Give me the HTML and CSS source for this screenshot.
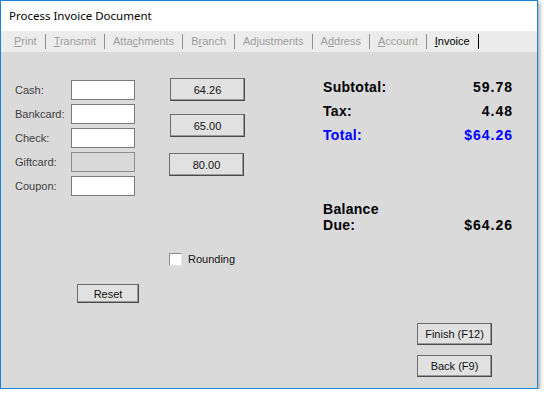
FILE: index.html
```html
<!doctype html>
<html>
    <head>
        <meta charset="UTF-8">
        <title>Process Invoice Document</title>
        <link rel="stylesheet" href="styles.css">
    </head>
    <body>
        <div class="window">
            <div class="titlebar">Process Invoice Document</div>
            <div class="tabs">
                <span class="tab"><u>P</u>rint</span>
                <span class="tab"><u>T</u>ransmit</span>
                <span class="tab">Atta<u>c</u>hments</span>
                <span class="tab">B<u>r</u>anch</span>
                <span class="tab">Ad<u>j</u>ustments</span>
                <span class="tab">A<u>d</u>dress</span>
                <span class="tab"><u>A</u>ccount</span>
                <span class="tab active"><u>I</u>nvoice</span>
            </div>
            <div class="main">
                <div class="col-left">
                    <div class="payments">
                        <label>Cash:</label><input type="text" class="field">
                        <label>Bankcard:</label><input type="text" class="field">
                        <label>Check:</label><input type="text" class="field">
                        <label>Giftcard:</label><input type="text" class="field" disabled>
                        <label>Coupon:</label><input type="text" class="field">
                    </div>
                    <button class="btn reset">Reset</button>
                </div>
                <div class="col-mid">
                    <button class="btn amount">64.26</button>
                    <button class="btn amount second">65.00</button>
                    <button class="btn amount third">80.00</button>
                    <label class="check"><span class="box"></span>Rounding</label>
                </div>
                <div class="col-right">
                    <div class="summary">
                        <div class="row"><span>Subtotal:</span><span class="val">59.78</span></div>
                        <div class="row"><span>Tax:</span><span class="val">4.48</span></div>
                        <div class="row total"><span>Total:</span><span class="val">$64.26</span></div>
                        <div class="row balance"><span>Balance<br>Due:</span><span class="val">$64.26</span></div>
                    </div>
                    <div class="actions">
                        <button class="btn action">Finish (F12)</button>
                        <button class="btn action back">Back (F9)</button>
                    </div>
                </div>
            </div>
        </div>
    </body>
</html>
```

FILE: styles.css
```css
*{
    margin: 0;
    padding: 0;
    box-sizing: border-box;
}
body{
    background: #ffffff;
    font-family: "Liberation Sans", Arial, sans-serif;
    font-size: 11px;
}
.window{
    width: 538px;
    height: 389px;
    border: 1px solid #1883d7;
    background: #dadada;
    box-shadow: 2px 2px 4px rgba(0,0,0,0.35);     /*窗口阴影*/
}
.titlebar{
    height: 30px;
    padding-left: 8px;
    background: #ffffff;
    font-family: "Noto Sans", "Open Sans", sans-serif;
    font-size: 11.5px;
    line-height: 30px;
    color: #000000;
}
.tabs{
    display: flex;
    align-items: center;
    height: 21px;
    padding-left: 5px;
    background: #ececec;
}
.tab{
    height: 15px;
    padding: 0 8px;
    line-height: 15px;
    color: #9d9d9d;
    border-right: 1px solid #8f8f8f;
}
.tab.active{
    color: #000000;
    border-right-color: #000000;
}
.main{
    display: flex;
    align-items: flex-start;
    padding: 26px 0 0 14px;
}
.col-left{
    display: flex;
    flex-direction: column;
    width: 155px;
}
.payments{
    display: grid;
    grid-template-columns: 56px 64px;
    grid-auto-rows: 20px;
    row-gap: 4px;
    margin-top: 2px;
}
.payments label{
    line-height: 20px;
    color: #3e3e3e;
}
.field{
    width: 64px;
    height: 20px;
    border: 1px solid #7a7a7a;
    background: #ffffff;
    outline: none;
}
.field:disabled{
    background: #dadada;
    border-color: #8c8c8c;
}
.btn{
    height: 23px;
    border: 1px solid #6c6c6c;
    border-right-color: #4a4a4a;
    border-bottom-color: #4a4a4a;
    background: #e1e1e1;
    box-shadow: inset -1px -1px 0 #9a9a9a;       /*按钮立体效果*/
    font-family: "Liberation Sans", Arial, sans-serif;
    font-size: 11px;
    color: #111111;
}
.reset{
    width: 62px;
    height: 19px;
    margin: 88px 0 0 62px;
}
.col-mid{
    display: flex;
    flex-direction: column;
    align-items: flex-start;
    width: 75px;
}
.amount{
    width: 75px;
}
.amount.second{
    margin-top: 13px;
}
.amount.third{
    margin: 16px 0 0 -1px;
}
.check{
    display: flex;
    align-items: center;
    gap: 6px;
    margin: 77px 0 0 -1px;
    line-height: 13px;
    color: #111111;
}
.box{
    width: 13px;
    height: 13px;
    background: #ffffff;
    border: 1px solid #8a8a8a;
    border-right-color: #e6e6e6;
    border-bottom-color: #e6e6e6;
}
.col-right{
    width: 189px;
    margin: -3px 0 0 78px;
}
.summary{
    font-size: 14px;
    font-weight: bold;
    letter-spacing: 0.3px;
    color: #000000;
}
.row{
    display: flex;
    justify-content: space-between;
    align-items: flex-end;
    line-height: 24px;
}
.val{
    letter-spacing: 1px;
    margin-right: -1px;
}
.row.total{
    color: #0000ff;
}
.row.balance{
    margin-top: 54px;
    line-height: 16px;
}
.actions{
    display: flex;
    flex-direction: column;
    margin: 90px 0 0 94px;
}
.action{
    width: 75px;
    height: 22px;
}
.action.back{
    margin-top: 10px;
}
```
